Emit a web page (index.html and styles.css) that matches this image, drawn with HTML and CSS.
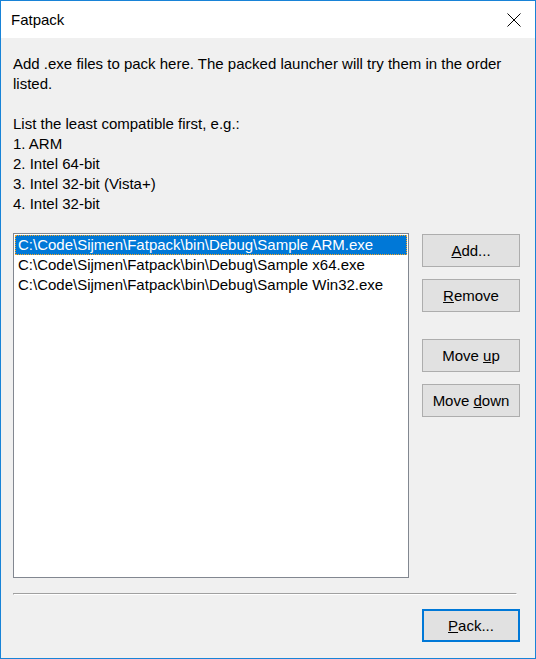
FILE: index.html
```html
<!DOCTYPE html>
<html>
<head>
<meta charset="utf-8">
<title>Fatpack</title>
<link rel="stylesheet" href="styles.css">
</head>
<body>
<div class="window">
  <div class="titlebar">
    <span class="title">Fatpack</span>
    <svg class="close" width="14" height="14" viewBox="0 0 14 14" aria-hidden="true">
      <path d="M0.5 0.5L13.5 13.5M13.5 0.5L0.5 13.5" stroke="#000" stroke-width="1" fill="none"/>
    </svg>
  </div>
  <div class="content">
    <div class="intro">
      <div>Add .exe files to pack here. The packed launcher will try them in the order</div>
      <div>listed.</div>
      <div class="blank">&nbsp;</div>
      <div>List the least compatible first, e.g.:</div>
      <div>1. ARM</div>
      <div>2. Intel 64-bit</div>
      <div>3. Intel 32-bit (Vista+)</div>
      <div>4. Intel 32-bit</div>
    </div>
    <div class="main">
      <div class="listbox">
        <div class="item selected">C:\Code\Sijmen\Fatpack\bin\Debug\Sample ARM.exe</div>
        <div class="item">C:\Code\Sijmen\Fatpack\bin\Debug\Sample x64.exe</div>
        <div class="item">C:\Code\Sijmen\Fatpack\bin\Debug\Sample Win32.exe</div>
      </div>
      <div class="buttons">
        <button class="btn"><u>A</u>dd...</button>
        <button class="btn"><u>R</u>emove</button>
        <button class="btn spaced">Move <u>u</u>p</button>
        <button class="btn">Move <u>d</u>own</button>
      </div>
    </div>
    <div class="separator"></div>
    <div class="footer">
      <button class="btn default"><u>P</u>ack...</button>
    </div>
  </div>
</div>
</body>
</html>
```

FILE: styles.css
```css
html, body {
  margin: 0;
  padding: 0;
  background: #f0f0f0;
}

body {
  font-family: "Liberation Sans", Arial, sans-serif;
  font-size: 15px;
  line-height: 20px;
  color: #000;
}

.window {
  width: 536px;
  height: 659px;
  box-sizing: border-box;
  border: 1px solid #1883d7;
  display: flex;
  flex-direction: column;
  background: #f0f0f0;
}

.titlebar {
  height: 37px;
  flex: none;
  background: #fff;
  display: flex;
  align-items: center;
  justify-content: space-between;
  padding-left: 10px;
  padding-right: 14px;
}

.title {
  font-size: 15px;
  line-height: 20px;
  padding-top: 1px;
}

.close {
  display: block;
  margin-top: 1px;
}

.content {
  flex: 1;
  display: flex;
  flex-direction: column;
  padding: 16px 15px 17px 12px;
}

.intro {
  white-space: nowrap;
}

.main {
  display: flex;
  gap: 13px;
  margin-top: 19px;
}

.listbox {
  width: 396px;
  height: 345px;
  box-sizing: border-box;
  border: 1px solid #828790;
  background: #fff;
  padding: 1px;
}

.item {
  height: 20px;
  line-height: 20px;
  padding-left: 3px;
  white-space: nowrap;
}

.item.selected {
  background: #0078d7;
  color: #fff;
  outline: 1px dotted #f5a623;
  outline-offset: -1px;
}

.buttons {
  display: flex;
  flex-direction: column;
  gap: 12px;
  padding-top: 1px;
}

.btn {
  width: 98px;
  height: 33px;
  box-sizing: border-box;
  border: 1px solid #adadad;
  background: #e1e1e1;
  font-family: "Liberation Sans", Arial, sans-serif;
  font-size: 15px;
  line-height: 20px;
  color: #000;
  padding: 0;
  margin: 0;
}

.btn.spaced {
  margin-top: 15px;
}

.btn.default {
  border: 2px solid #0078d7;
}

.separator {
  margin-top: 15px;
  margin-right: 3px;
  height: 1px;
  border-top: 1px solid #a0a0a0;
  border-left: 1px solid #a0a0a0;
  border-right: 1px solid #fff;
  border-bottom: 1px solid #fff;
  height: 0;
}

.footer {
  display: flex;
  justify-content: flex-end;
  margin-top: 14px;
}
```
